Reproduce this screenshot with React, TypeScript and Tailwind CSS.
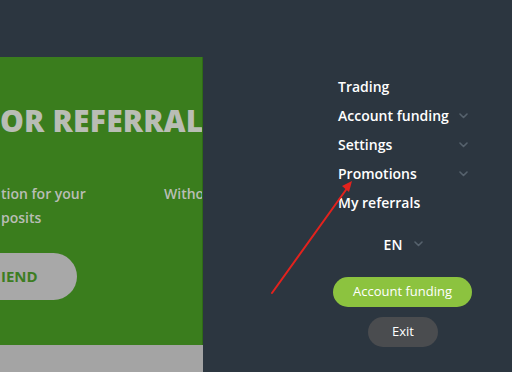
import React from "react";

const Chevron = ({ className = "" }: { className?: string }) => (
  <svg width="9" height="6" viewBox="0 0 9 6" className={className}>
    <path d="M1 1 L4.5 4.5 L8 1" fill="none" stroke="#56626d" strokeWidth="1.6" strokeLinecap="round" strokeLinejoin="round" />
  </svg>
);

export default function App() {
  const items: { label: string; chev: boolean }[] = [
    { label: "Trading", chev: false },
    { label: "Account funding", chev: true },
    { label: "Settings", chev: true },
    { label: "Promotions", chev: true },
    { label: "My referrals", chev: false },
  ];
  return (
    <div
      className="relative w-[512px] h-[372px] bg-[#2c3640] flex overflow-hidden"
      style={{ fontFamily: '"Open Sans", "Noto Sans", sans-serif' }}
    >
      <div className="w-[203px] shrink-0 flex flex-col pt-[57px]">
        <div className="h-[288px] bg-[#3a7d1d] overflow-hidden flex flex-col border-r border-[#2f6a17]">
          <div className="pt-[47px] h-[81px] text-[30px] leading-[34px] font-extrabold text-[#b9bdb5] whitespace-nowrap tracking-[0.2px]">
            OR REFERRALS
          </div>
          <div className="mt-[44px] flex text-[14px] leading-[24px] font-semibold text-[#b9bdb5] whitespace-nowrap">
            <div className="w-[164px] shrink-0 pl-[1px]">
              <div>tion for your</div>
              <div>posits</div>
            </div>
            <div className="shrink-0">Without</div>
          </div>
          <div className="mt-[23px] w-[77px] h-[47px] shrink-0 rounded-r-full bg-[#a8a8a8] flex items-center pl-[1px] text-[15px] font-bold text-[#3c7d22]">
            IEND
          </div>
        </div>
        <div className="flex-1 bg-[#a4a4a4]" />
      </div>
      <div className="pl-[130px] pt-[72px] flex flex-col w-[269px]">
        <div className="w-[139px] flex flex-col">
          {items.map((it) => (
            <div key={it.label} className="h-[29px] pl-[5px] pr-[4px] flex items-center justify-between">
              <span className="text-[14px] font-semibold text-white">{it.label}</span>
              {it.chev && <Chevron />}
            </div>
          ))}
          <div className="mt-[17px] h-[20px] flex items-center justify-center">
            <span className="text-[14px] font-semibold text-white ml-[2px]">EN</span>
            <Chevron className="ml-[12px]" />
          </div>
          <div className="mt-[23px] h-[30px] rounded-full bg-[#8cc33f] flex items-center justify-center text-[13px] text-white">
            Account funding
          </div>
          <div className="mt-[10px] self-center ml-[1px] w-[70px] h-[30px] rounded-full bg-[#4a4c4f] flex items-center justify-center text-[13px] text-white">
            Exit
          </div>
        </div>
      </div>
      <svg className="absolute left-0 top-0 pointer-events-none" width="512" height="372">
        <line x1="272" y1="293" x2="348" y2="187" stroke="#e3221d" strokeWidth="2" strokeLinecap="round" />
        <polygon points="352,181 342,186 349,192" fill="#e3221d" />
      </svg>
    </div>
  );
}
